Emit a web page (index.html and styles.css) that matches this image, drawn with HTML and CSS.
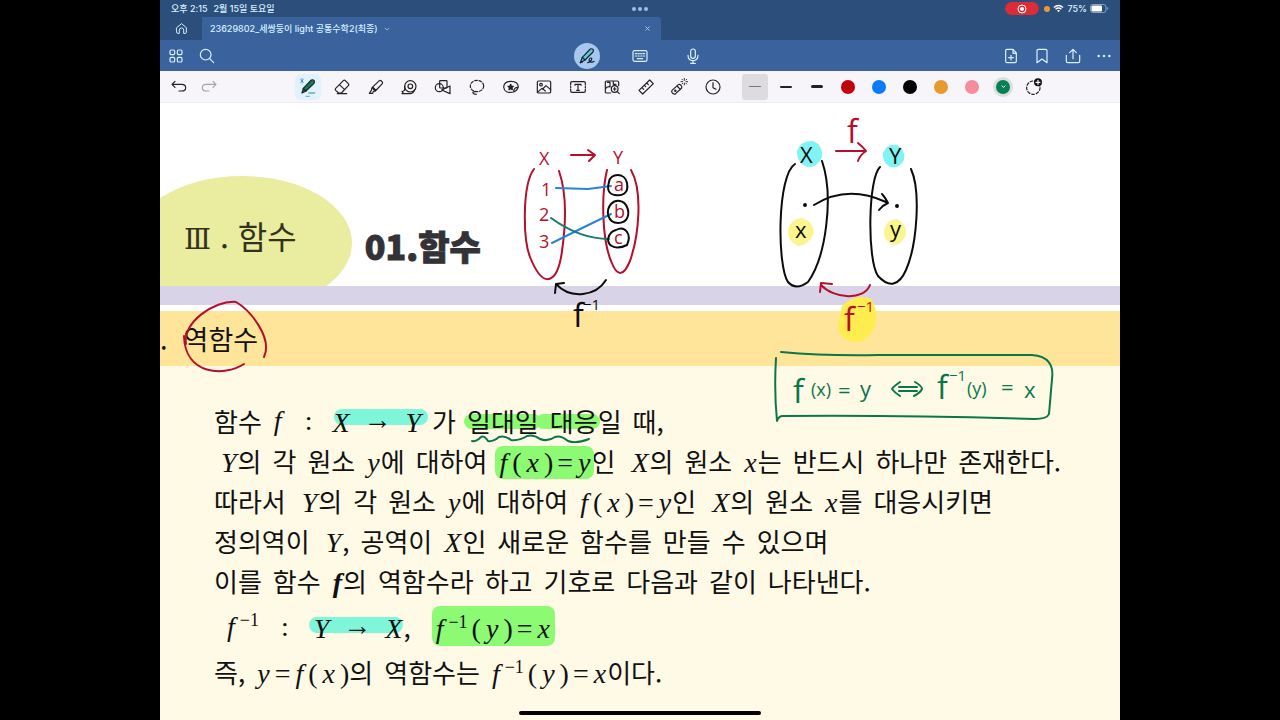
FILE: index.html
```html
<!DOCTYPE html>
<html lang="ko">
<head>
    <meta charset="UTF-8">
    <meta name="viewport" content="width=device-width, initial-scale=1.0">
    <title>23629802_세쌍둥이 light 공통수학2(최종)</title>
    <link rel="stylesheet" href="styles.css">
</head>
<body>
    <div class="app">
        <header>
            <div class="status">
                <div class="status-left"><span>오후 2:15</span><span>2월 15일 토요일</span></div>
                <div class="dots"><i></i><i></i><i></i></div>
                <div class="status-right">
                    <span class="rec"><svg viewBox="0 0 10 10" width="10" height="10"><circle cx="5" cy="5" r="4" fill="none" stroke="#fff"/><circle cx="5" cy="5" r="2" fill="#fff"/></svg></span>
                    <span class="mic-dot"></span>
                    <svg viewBox="0 0 12 9" width="11" height="9" fill="none" stroke="#fff" stroke-width="1.5"><path d="M1 3.3Q6-1 11 3.3M2.8 5.4Q6 2.6 9.2 5.4"/><path d="M4.3 6.8Q6 5.4 7.7 6.8L6 8.6z" fill="#fff" stroke="none"/></svg>
                    <span>75%</span>
                    <svg viewBox="0 0 19 9" width="19" height="9"><rect x=".5" y=".5" width="15.5" height="8" rx="2.4" fill="none" stroke="#8ca3c4"/><rect x="1.5" y="1.5" width="10.5" height="6" rx="1.3" fill="#fff"/><path d="M17.3 3v3q1-.4 1-1.5T17.300 3" fill="#8ca3c4"/></svg>
                </div>
            </div>

            <div class="tabs">
                <button class="home" aria-label="홈"><svg class="icon small" viewBox="0 0 24 24"><path d="M3 10.500 12 3l9 7.500V19q0 2-2 2h-3v-6q0-4-4-4t-4 4v6H5q-2 0-2-2z"/></svg></button>
                <div class="tab">
                    <span>23629802_세쌍둥이 light 공통수학2(최종)</span>
                    <svg class="chevron" viewBox="0 0 8 5" width="6" height="4"><path d="M1 1l3 3 3-3"/></svg>
                    <button class="close" aria-label="탭 닫기"><svg viewBox="0 0 6 6" width="5" height="5"><path d="M.5.5l5 5m0-5l-5 5"/></svg></button>
                </div>
            </div>

            <nav class="nav">
                <div class="nav-left">
                    <button aria-label="썸네일"><svg class="icon" viewBox="0 0 24 24"><rect x="3" y="3" width="7" height="7" rx="2"/><rect x="14" y="3" width="7" height="7" rx="2"/><rect x="3" y="14" width="7" height="7" rx="2"/><rect x="14" y="14" width="7" height="7" rx="2"/></svg></button>
                    <button aria-label="검색"><svg class="icon" viewBox="0 0 24 24"><circle cx="10" cy="10" r="8"/><path d="M16 16l6 6"/></svg></button>
                </div>
                <div class="nav-mid">
                    <button class="on" aria-label="펜"><svg class="icon" viewBox="0 0 24 24"><path d="M2 22l3-8L17 1.500q2.500-1 4 .5t0 4L9 18z" fill="#63c9c8"/><path d="M5 14l4 4M2 22l3-1"/><path d="M13 22c5-1 8-7 5-7s-4 5-1 6 4-.5 5.500-1"/></svg></button>
                    <button aria-label="키보드"><svg class="icon" viewBox="0 0 24 24"><rect x="1.500" y="4" width="21" height="16" rx="2.500"/><path d="M5 8.500h2m2 0h2m2 0h2m2 0h2M5 12h2m2 0h2m2 0h2m2 0h2M8 16h8"/></svg></button>
                    <button aria-label="녹음"><svg class="icon" viewBox="0 0 24 24"><rect x="8.500" y="1.500" width="7" height="14" rx="3.500"/><path d="M4.500 11q0 8 7.500 8t7.500-8M12 19v4M8.500 23h7"/></svg></button>
                </div>
                <div class="nav-right">
                    <button aria-label="페이지 추가"><svg class="icon" viewBox="0 0 24 24"><path d="M15 2H6Q4 2 4 4v16q0 2 2 2h12q2 0 2-2V7.500zv6h5M12 11v7m-3.500-3.500h7"/></svg></button>
                    <button aria-label="북마크"><svg class="icon" viewBox="0 0 24 24"><path d="M4.500 22V4q0-2 2-2h11q2 0 2 2v18L12 16.500z"/></svg></button>
                    <button aria-label="공유"><svg class="icon" viewBox="0 0 24 24"><path d="M2 11v9q0 2 2 2h16q2 0 2-2v-9M12 16V2M7 7l5-5 5 5"/></svg></button>
                    <button aria-label="더보기"><svg class="icon dots-icon" viewBox="0 0 24 24"><circle cx="4" cy="12" r="1.800"/><circle cx="12" cy="12" r="1.800"/><circle cx="20" cy="12" r="1.800"/></svg></button>
                </div>
            </nav>
        </header>

        <div class="toolbar">
            <div class="history">
                <button aria-label="실행 취소"><svg class="icon" viewBox="0 0 24 24"><path d="M6 3.500L1.500 8 6 12.500M2 8h14q6 0 6 5t-6 5h-4"/></svg></button>
                <button class="off" aria-label="다시 실행"><svg class="icon" viewBox="0 0 24 24"><path d="M18 3.500L22.500 8 18 12.500M22 8H8q-6 0-6 5t6 5h4"/></svg></button>
            </div>
            <div class="tools">
                <button class="pen-on" aria-label="펜"><svg class="icon" viewBox="0 0 24 24"><path d="M3 21l2-7L17 1.500q2.500-1 4 .5t0 4.500L9 18z" fill="#16795d"/><path d="M5 14l4 4" /><path d="M13 21h9" stroke="#39887b"/><path d="M3-1v7M1 1l4 4m0-4L1 5M9 26h5" stroke="#4a84c5" stroke-width="1.200"/></svg></button>
                <button aria-label="지우개"><svg class="icon" viewBox="0 0 24 24"><path d="M2.500 14L14 2.500q1.500-1.500 3 0L21.500 7q1.500 1.500 0 3L11 21H7l-4.500-4q-1.500-1.500 0-3zM8 8.500l8 7.500M5 22h14"/></svg></button>
                <button aria-label="형광펜"><svg class="icon" viewBox="0 0 24 24"><path d="M6 13L17 2.500q1.500-1 3 .5l1 1q1.500 1.500.5 3L11 18zM6 13l-1 4-3 4.500h5l1-3 3-.5M7 12l5 5"/></svg></button>
                <button aria-label="테이프"><svg class="icon" viewBox="0 0 24 24"><circle cx="14" cy="11" r="8.500"/><circle cx="14" cy="11" r="3.500"/><path d="M5.500 11v6l-4 2L3 20.500 1.500 22H14q5-.5 6.500-6"/></svg></button>
                <button aria-label="도형"><svg class="icon" viewBox="0 0 24 24"><circle cx="6.500" cy="13" r="6"/><rect x="7" y="2.500" width="11" height="11" rx="1"/><path d="M10 16.500l12.500-6V22z"/></svg></button>
                <button aria-label="올가미"><svg class="icon" viewBox="0 0 24 24"><ellipse cx="12" cy="10.500" rx="10" ry="8.500" stroke-dasharray="4 2.600"/><path d="M9 19q-4 0-3 2t5 2"/></svg></button>
                <button aria-label="스티커"><svg class="icon" viewBox="0 0 24 24"><path d="M16 19.500q-14 3-15-7.500Q1.500 3.500 12 3.500T23 12q-2.500 6-7 7.500 0-7 7-7.500"/><path d="M11.500 8l1 2.500 3 .5-2 2 .5 3-2.500-1.500L9 16l.5-3-2-2 3-.5z" fill="#222"/></svg></button>
                <button aria-label="사진"><svg class="icon" viewBox="0 0 24 24"><rect x="2" y="3" width="20" height="18" rx="2"/><circle cx="7.500" cy="8.500" r="2"/><path d="M2 20l7-6 5 4M10 15l5-5 7 6"/></svg></button>
                <button aria-label="텍스트"><svg class="icon" viewBox="0 0 24 24"><path d="M1 9V6q0-2 2-2h18q2 0 2 2v3M1 15v3q0 2 2 2h18q2 0 2-2v-3M1 11v2M23 11v2M7.500 9.500V8h9v1.500M12 8v9m-2 0h4"/></svg></button>
                <button aria-label="이미지 검색"><svg class="icon" viewBox="0 0 24 24"><path d="M10 21H4q-2 0-2-2V5q0-2 2-2h16q2 0 2 2v5M2 15q3-5 7-3V5H5M14 3v5h4"/><circle cx="16" cy="15" r="5"/><path d="M20 19l3 3M16 13v4m-2-2h4"/></svg></button>
                <button aria-label="자"><svg class="icon" viewBox="0 0 24 24"><path d="M1.500 17L17.500 1.500 23 7 7 22.500zM6 13l2.500 2.500M9.500 9.500l2 2M13 6l2.500 2.500"/></svg></button>
                <button aria-label="레이저"><svg class="icon" viewBox="0 0 24 24"><path d="M1.500 17L11 8.500q2-1 4 1t1 4L7 22q-2 1.500-4.500-.5t-1-4.500zM9 10.500l5 5"/><circle cx="6.500" cy="17.500" r="1"/><path d="M20-1v3m0 4v3M15 4h2.500m5 0H25M16.500.5l1 1m5 5l1 1m0-7l-1 1m-5 5l-1 1" stroke-width="1.400"/></svg></button>
                <button aria-label="타이머"><svg class="icon" viewBox="0 0 24 24"><circle cx="12" cy="12" r="10.500"/><path d="M12 5.500V13l4.500 2.500"/></svg></button>
            </div>
            <div class="pens">
                <button class="width picked" aria-label="가늘게"><i class="thin"></i></button>
                <button class="width" aria-label="보통"><i class="mid"></i></button>
                <button class="width" aria-label="굵게"><i class="thick"></i></button>
                <button aria-label="빨강"><i class="swatch red"></i></button>
                <button aria-label="파랑"><i class="swatch blue"></i></button>
                <button aria-label="검정"><i class="swatch black"></i></button>
                <button aria-label="주황"><i class="swatch orange"></i></button>
                <button aria-label="분홍"><i class="swatch pink"></i></button>
                <button aria-label="초록"><i class="swatch green"><svg viewBox="0 0 8 5" width="5" height="3"><path d="M1 1l3 3 3-3" fill="none" stroke="#fff" stroke-width="1.500"/></svg></i></button>
                <button aria-label="색 추가"><svg class="icon" viewBox="0 0 24 24"><circle cx="11" cy="13" r="10" stroke-dasharray="4 3"/><circle cx="18" cy="5" r="6" fill="#111" stroke="none"/><path d="M18 2v6m-3-3h6" stroke="#fff"/></svg></button>
            </div>
        </div>

        <main class="page">
            <section class="cover">
                <h1><span class="roman">Ⅲ</span> . 함수</h1>
                <h2>01.함수</h2>
            </section>
            <div class="band"></div>
            <h3 class="topic"><span>.</span>역함수</h3>

            <section class="note">
                <p><span>함수</span><span class="math wide"><var>f</var><b>:</b></span><span><mark class="cyan math arrow"><var>X</var><b>→</b><var>Y</var></mark>가</span><span><mark class="green">일대일</mark></span><span><mark class="green join">대응</mark>일</span><span>때,</span></p>
                <p class="indent"><span><var class="cap">Y</var>의</span><span>각</span><span>원소</span><span><var>y</var>에</span><span>대하여</span><span><mark class="green box math"><var>f</var><b>(</b><var>x</var><b>)</b><b>=</b><var>y</var></mark>인</span><span><var class="cap">X</var>의</span><span>원소</span><span><var>x</var>는</span><span>반드시</span><span>하나만</span><span>존재한다.</span></p>
                <p><span>따라서</span><span><var class="cap">Y</var>의</span><span>각</span><span>원소</span><span><var>y</var>에</span><span>대하여</span><span><span class="math"><var>f</var><b>(</b><var>x</var><b>)</b><b>=</b><var>y</var></span>인</span><span><var class="cap">X</var>의</span><span>원소</span><span><var>x</var>를</span><span>대응시키면</span></p>
                <p><span>정의역이</span><span><var class="cap">Y</var>,</span><span>공역이</span><span><var>X</var>인</span><span>새로운</span><span>함수를</span><span>만들</span><span>수</span><span>있으며</span></p>
                <p><span>이를</span><span>함수</span><span><var class="strong">f</var>의</span><span>역함수라</span><span>하고</span><span>기호로</span><span>다음과</span><span>같이</span><span>나타낸다.</span></p>
                <div class="formulas">
                    <p class="inverse"><span class="math wide"><span class="math"><var>f</var><sup>−1</sup></span><b>:</b></span><span><mark class="cyan math arrow"><var>Y</var><b>→</b><var>X</var></mark>,</span><span><mark class="green box math"><var>f</var><sup>−1</sup><b>(</b><var>y</var><b>)</b><b>=</b><var>x</var></mark></span></p>
                    <p><span>즉,</span><span><span class="math"><var>y</var><b>=</b><var>f</var><b>(</b><var>x</var><b>)</b></span>의</span><span>역함수는</span><span><span class="math"><var>f</var><sup>−1</sup><b>(</b><var>y</var><b>)</b><b>=</b><var>x</var></span>이다.</span></p>
                </div>
            </section>

            <!-- pen strokes on top of the page, one group per pen colour -->
            <svg class="ink" viewBox="160 102 960 618">
                <g class="marker">
                    <path d="M797 150q4-11 16-10 10 4 9 16-4 10-14 10-11-3-11-16zM883 152q4-10 14-8 9 5 7 15-5 9-14 7-8-5-7-14z" fill="#80f3f5"/>
                    <path d="M788 229q3-12 15-12 11 5 11 15-6 13-16 13-11-5-10-16zM884 229q3-11 13-11 10 5 9 16-5 11-14 10-9-5-8-15z" fill="#fbf58f"/>
                    <path d="M842 305q14-13 29-7 9 13 3 29-8 15-20 14-15-2-16-17z" fill="#ffed50"/>
                </g>
                <g class="red">
                    <path d="M186 343C182 322 214 299 236 301C250 309 273 337 264 356M184 335C185 374 224 376 244 363"/>
                    <path d="M534 168C522 184 523 238 530 256C544 291 558 281 562 250C567 215 566 190 559 170"/>
                    <path d="M607 169C601 194 602 238 611 260Q620 284 630 260C639 234 643 190 631 169"/>
                    <path d="M571 154H595M588 149l7 5-6 6"/>
                    <path d="M836 150H866M858 142q5 4 8 8-6 4-8 10"/>
                    <path d="M870 284C864 300 834 298 821 284M820 291l1-9 11 1"/>
                    <g class="letters">
                        <text x="539" y="164">X</text><text x="613" y="163">Y</text>
                        <text x="541" y="195">1</text><text x="539" y="220">2</text><text x="539" y="247">3</text>
                        <text x="614" y="190">a</text><text x="614" y="217">b</text><text x="614" y="243">c</text>
                        <text x="847" y="142" class="func">f</text>
                        <text x="844" y="330" class="func">f</text><text x="857" y="311" class="power">−1</text>
                    </g>
                </g>
                <g class="blue"><path d="M556 187L588 188 611 185M552 242Q580 228 611 213"/></g>
                <g class="teal"><path d="M551 217Q580 238 609 238"/></g>
                <g class="black">
                    <path d="M609 181c1-9 16-10 18 1s-5 13-12 12-8-6-6-13zM611 203c5-5 13-4 16 3s1 16-9 16-13-12-7-19zM616 229c9-5 16 4 11 15-10 5-19 2-19-6 1-5 4-8 8-9"/>
                    <path d="M606 279C596 295 571 299 556 283M555 292l1-9 8-1"/>
                    <path d="M795 163C777 174 777 265 788 281Q796 290 808 281C826 256 834 195 822 160"/>
                    <path d="M880 166C868 177 867 259 878 275C889 287 899 285 906 269C917 244 921 190 911 168"/>
                    <path d="M814 204Q847 183 886 201M882 193q3 3 6 9-5 2-9 7"/>
                    <circle cx="805" cy="204" r="1"/><circle cx="897" cy="205" r="1"/>
                    <g class="letters">
                        <text x="573" y="326" class="func">f</text><text x="583" y="309" class="power">−1</text>
                        <text x="800" y="162" class="big">X</text><text x="889" y="163" class="big">Y</text>
                        <text x="795" y="237" class="big">x</text><text x="890" y="236" class="big">y</text>
                    </g>
                </g>
                <g class="darkgreen">
                    <path d="M781 351Q825 355 878 354H1032C1048 355 1054 364 1052 378L1049 413Q1047 418 1035 418C970 416 900 414 782 415Q778 416 777 420Q774 390 776 357"/>
                    <path d="M899 386h18M899 390h18M900 381q-7 5-8 7 3 4 8 7M915 381q7 4 7 7-2 4-8 7"/>
                    <path d="M472 440Q476 441 481 436Q484 434 488 440Q493 441 499 436Q505 434 511 439Q519 440 527 435Q533 433 540 438Q548 441 555 436Q561 434 568 440Q576 443 589 438"/>
                    <g class="letters">
                        <text x="793" y="402" class="func">f</text><text x="811" y="395">(x)</text><text x="838" y="397" class="big">=</text><text x="860" y="396" class="big">y</text>
                        <text x="937" y="398" class="func">f</text><text x="949" y="380" class="power">−1</text><text x="967" y="394">(y)</text><text x="1001" y="394" class="big">=</text><text x="1024" y="397" class="big">x</text>
                    </g>
                </g>
            </svg>
        </main>
        <div class="home-bar"></div>
    </div>
</body>
</html>
```
FILE: styles.css
```css
* {
    box-sizing: border-box;
}
body {
    margin: 0;
    background: #000;
    font-family: Inter, "Noto Sans CJK KR", sans-serif;
}
button {
    display: flex;
    align-items: center;
    justify-content: center;
    width: 26px;
    height: 26px;
    padding: 0;
    border: 0;
    background: none;
    color: inherit;
    cursor: pointer;
}
.app {
    position: relative;
    display: flex;
    flex-direction: column;
    width: 75%;
    min-height: 100vh;
    margin: 0 auto;
    background: #fffae6;
}
.icon {
    width: 16px;
    height: 16px;
    fill: none;
    stroke: currentColor;
    stroke-width: 1.8;
    stroke-linecap: round;
    stroke-linejoin: round;
    overflow: visible;
}
.icon.small {
    width: 13px;
    height: 13px;
}
.icon.dots-icon {
    fill: currentColor;
    stroke: none;
}

/* top bars */
header {
    background: #2c4e7b;
    color: #d9f1ff;
}
.status {
    display: grid;
    grid-template-columns: 1fr auto 1fr;
    align-items: center;
    height: 17px;
    padding: 0 11px;
    font-size: 9px;
    font-weight: 500;
    line-height: 17px;
}
.status-left {
    display: flex;
    gap: 6px;
}
.dots {
    display: flex;
    gap: 2px;
}
.dots i {
    width: 4px;
    height: 4px;
    border-radius: 50%;
    background: #a3c0e4;
}
.status-right {
    display: flex;
    align-items: center;
    justify-content: flex-end;
    gap: 3px;
}
.rec {
    display: flex;
    align-items: center;
    justify-content: center;
    width: 34px;
    height: 13px;
    margin-right: 2px;
    border-radius: 7px;
    background: #dc2c36;
}
.mic-dot {
    width: 6px;
    height: 6px;
    border-radius: 50%;
    background: #e69a35;
}
.tabs {
    display: flex;
    height: 23px;
}
.home {
    width: 42px;
    height: 23px;
}
.tab {
    display: flex;
    align-items: center;
    flex: 0 1 459px;
    gap: 6px;
    padding: 0 8px;
    border-radius: 0 3px 0 0;
    background: #3a629d;
    font-size: 9px;
    font-weight: 500;
    white-space: nowrap;
}
.chevron,
.close svg {
    fill: none;
    stroke: #b6d3f2;
}
.close {
    width: 12px;
    height: 12px;
    margin-left: auto;
}
.nav {
    display: grid;
    grid-template-columns: 1fr auto 1fr;
    align-items: center;
    height: 31px;
    padding: 0 3px;
    background: #3a629d;
}
.nav-left,
.nav-right {
    display: flex;
    gap: 5px;
}
.nav-right {
    justify-content: flex-end;
}
.nav-mid {
    display: flex;
    gap: 27px;
}
.nav .on {
    border-radius: 50%;
    background: #a9c6ee;
    color: #14233c;
}

/* drawing tools */
.toolbar {
    display: flex;
    align-items: center;
    height: 32px;
    padding-left: 6px;
    border-bottom: 1px solid #ececef;
    background: #f7f5f9;
    color: #222;
}
.history {
    display: flex;
    gap: 4px;
}
.off {
    color: #a5a4a9;
}
.tools {
    display: flex;
    flex: 0 1 431px;
    justify-content: space-between;
    margin-left: auto;
}
.pen-on {
    border-radius: 6px;
    background: #e2f2fd;
}
.pens {
    display: flex;
    gap: 5px;
    margin: 0 auto 0 16px;
}
.picked {
    border-radius: 3px;
    background: #dddbe0;
}
.width i {
    width: 12px;
    border-radius: 2px;
    background: #222;
}
.width .thin {
    height: 1px;
    background: #777;
}
.width .mid {
    height: 2px;
}
.width .thick {
    height: 3px;
}
.swatch {
    display: flex;
    align-items: center;
    justify-content: center;
    width: 14px;
    height: 14px;
    border-radius: 50%;
}
.swatch.red { background: #c20008; }
.swatch.blue { background: #0b7cf8; }
.swatch.black { background: #000; }
.swatch.orange { background: #e79b2e; }
.swatch.pink { background: #f58d9b; }
.swatch.green {
    background: #087f55;
    box-shadow: 0 0 0 3px #dadfde;
}

/* textbook page */
.page {
    position: relative;
    flex: 1;
    font-family: "Noto Sans CJK KR", sans-serif;
    color: #111;
}
.cover {
    position: relative;
    display: flex;
    align-items: center;
    gap: 68px;
    height: 183px;
    padding: 86px 24px 0;
    overflow: hidden;
    background: #fff;
}
.cover::before {
    content: "";
    position: absolute;
    top: 73px;
    left: -28px;
    width: 220px;
    height: 134px;
    border-radius: 50%;
    background: #eaeca0;
}
.cover h1,
.cover h2 {
    position: relative;
    margin: 0;
    white-space: nowrap;
}
.cover h1 {
    font-size: 32px;
    font-weight: 400;
    line-height: 48px;
    color: #33331c;
}
.roman {
    font-family: "DejaVu Serif", serif;
    font-size: 28px;
}
.cover h2 {
    padding-top: 16px;
    font-size: 34px;
    font-weight: 900;
    line-height: 48px;
    color: #333236;
    -webkit-text-stroke: 1px #333236;
}
.band {
    height: 25px;
    border-bottom: 6px solid #fff;
    background: #d9d3e7;
}
.topic {
    display: flex;
    gap: 16px;
    height: 55px;
    margin: 0;
    background: #fee59a;
    font-size: 27px;
    font-weight: 400;
    line-height: 55px;
}
.note {
    padding: 35px 54px 0;
    font-size: 26px;
    line-height: 40px;
}
.note p {
    display: flex;
    gap: 11px;
    height: 40px;
    margin: 0;
    white-space: nowrap;
}
.note .indent {
    padding-left: 2px;
}
.formulas {
    padding-top: 3px;
    line-height: 45px;
}
.note .formulas p {
    height: 45px;
}
.note .inverse {
    gap: 24px;
    padding-left: 12px;
}
var,
.math {
    font-family: "Liberation Serif", serif;
    font-size: 28px;
    line-height: 28px;
}
var {
    margin: 0 1px;
}
.cap {
    margin-left: 5px;
}
.math {
    display: inline-flex;
    gap: 4px;
}
.math b {
    font-weight: 400;
}
p > .math {
    align-self: center;
}
.wide {
    gap: 22px;
    margin-right: 8px;
}
.inverse .wide {
    margin-right: 0;
}
.arrow {
    gap: 13px;
    margin-right: 10px;
}
.arrow b {
    line-height: 22px;
}
.inverse .arrow {
    margin-right: 0;
}
.strong {
    font-weight: 700;
}
sup {
    font-size: 18px;
    line-height: 14px;
}
mark {
    position: relative;
    isolation: isolate;
    background: none;
    color: inherit;
}
mark::before {
    content: "";
    position: absolute;
    z-index: -1;
    border-radius: 8px;
}
.cyan::before {
    inset: 0 -6px 12px 3px;
    background: #7ff5da;
}
.green::before {
    inset: 12px -2px 10px -3px;
    background: #8cfa73;
}
.join::before {
    left: -14px;
}
.green.box::before {
    inset: -3px -2px -2px -3px;
}
.inverse .cyan::before {
    inset: 2px 0 10px -4px;
}
.inverse .box::before {
    inset: -9px -4px -3px -3px;
}
.ink {
    position: absolute;
    top: 0;
    left: 0;
    width: 100%;
    fill: none;
    stroke-width: 2;
    stroke-linecap: round;
    stroke-linejoin: round;
    pointer-events: none;
}
.marker {
    stroke: none;
}
.ink .red { stroke: #b40f2b; color: #b40f2b; }
.ink .blue { stroke: #2584dc; }
.ink .teal { stroke: #167a70; }
.ink .black { stroke: #0b0b0b; color: #0b0b0b; }
.ink .darkgreen { stroke: #08774a; color: #08774a; }
.ink .letters {
    fill: currentColor;
    stroke: none;
    font-family: "Open Sans", sans-serif;
    font-size: 18px;
}
.letters .big {
    font-size: 22px;
}
.letters .func {
    font-size: 32px;
}
.letters .power {
    font-size: 15px;
}
.home-bar {
    position: absolute;
    bottom: 5px;
    left: 50%;
    width: 242px;
    height: 4px;
    margin-left: -121px;
    border-radius: 2px;
    background: #000;
}
```
